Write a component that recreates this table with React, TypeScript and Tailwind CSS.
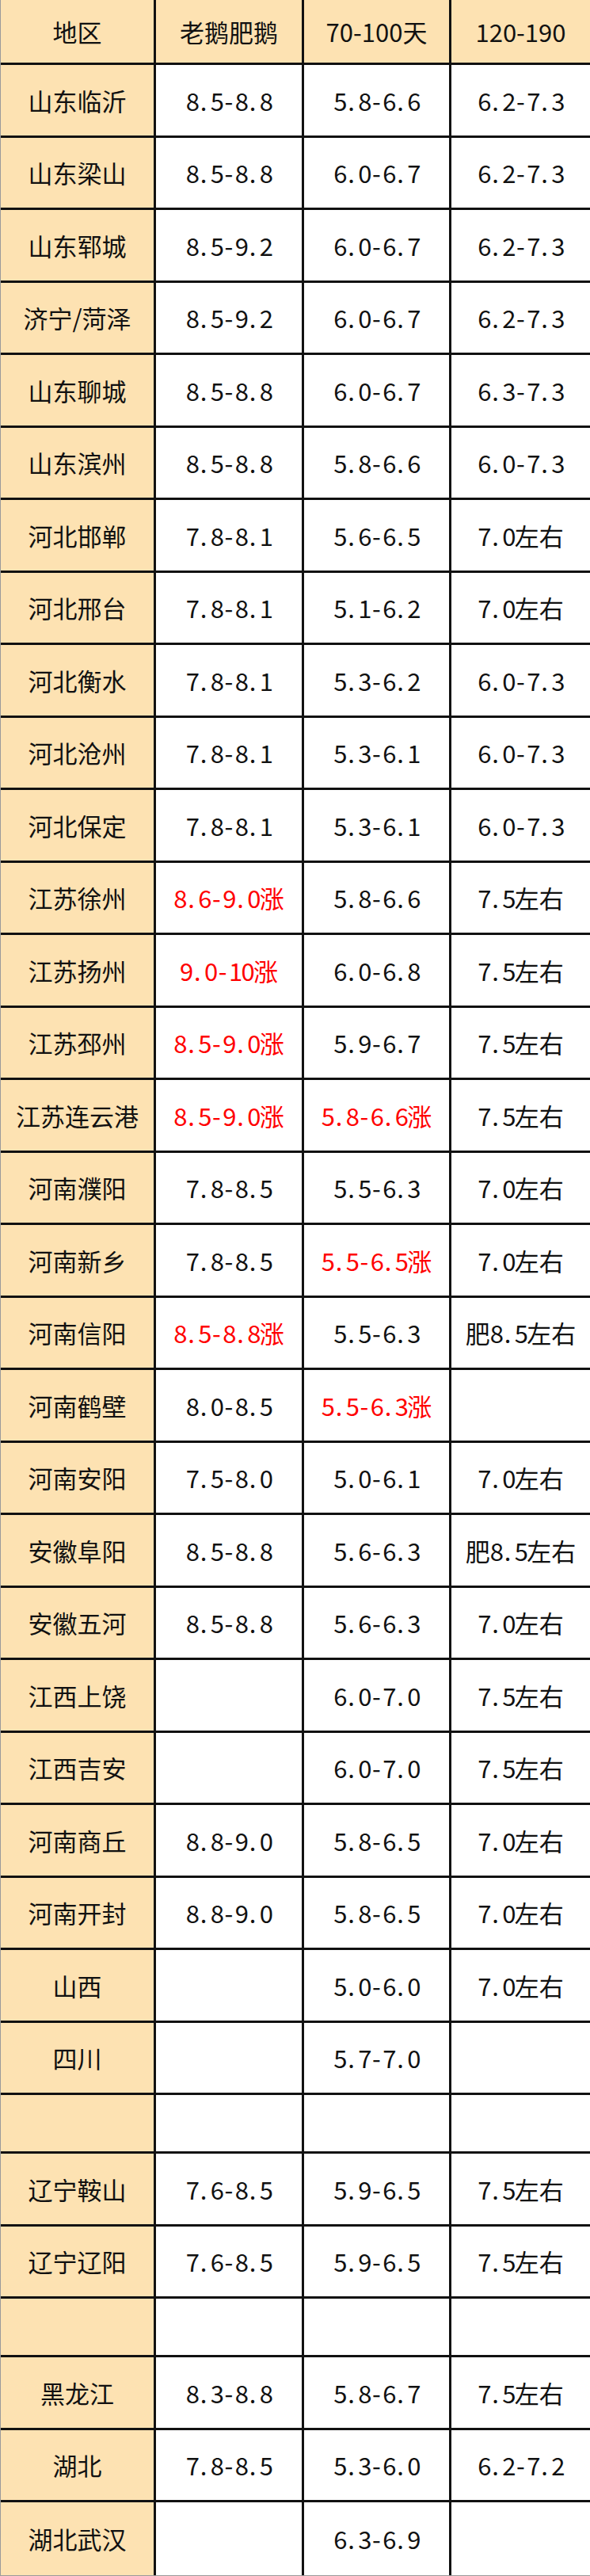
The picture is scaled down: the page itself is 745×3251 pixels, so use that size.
type Cell = string | { text: string; up: true };

interface Row {
  region: string;
  old?: Cell;
  mid?: Cell;
  late?: Cell;
  empty?: boolean;
}

const up = (text: string): Cell => ({ text, up: true });

const rows: Row[] = [
  { region: '山东临沂', old: '8.5-8.8', mid: '5.8-6.6', late: '6.2-7.3' },
  { region: '山东梁山', old: '8.5-8.8', mid: '6.0-6.7', late: '6.2-7.3' },
  { region: '山东郓城', old: '8.5-9.2', mid: '6.0-6.7', late: '6.2-7.3' },
  { region: '济宁/菏泽', old: '8.5-9.2', mid: '6.0-6.7', late: '6.2-7.3' },
  { region: '山东聊城', old: '8.5-8.8', mid: '6.0-6.7', late: '6.3-7.3' },
  { region: '山东滨州', old: '8.5-8.8', mid: '5.8-6.6', late: '6.0-7.3' },
  { region: '河北邯郸', old: '7.8-8.1', mid: '5.6-6.5', late: '7.0左右' },
  { region: '河北邢台', old: '7.8-8.1', mid: '5.1-6.2', late: '7.0左右' },
  { region: '河北衡水', old: '7.8-8.1', mid: '5.3-6.2', late: '6.0-7.3' },
  { region: '河北沧州', old: '7.8-8.1', mid: '5.3-6.1', late: '6.0-7.3' },
  { region: '河北保定', old: '7.8-8.1', mid: '5.3-6.1', late: '6.0-7.3' },
  { region: '江苏徐州', old: up('8.6-9.0涨'), mid: '5.8-6.6', late: '7.5左右' },
  { region: '江苏扬州', old: up('9.0-10涨'), mid: '6.0-6.8', late: '7.5左右' },
  { region: '江苏邳州', old: up('8.5-9.0涨'), mid: '5.9-6.7', late: '7.5左右' },
  { region: '江苏连云港', old: up('8.5-9.0涨'), mid: up('5.8-6.6涨'), late: '7.5左右' },
  { region: '河南濮阳', old: '7.8-8.5', mid: '5.5-6.3', late: '7.0左右' },
  { region: '河南新乡', old: '7.8-8.5', mid: up('5.5-6.5涨'), late: '7.0左右' },
  { region: '河南信阳', old: up('8.5-8.8涨'), mid: '5.5-6.3', late: '肥8.5左右' },
  { region: '河南鹤壁', old: '8.0-8.5', mid: up('5.5-6.3涨') },
  { region: '河南安阳', old: '7.5-8.0', mid: '5.0-6.1', late: '7.0左右' },
  { region: '安徽阜阳', old: '8.5-8.8', mid: '5.6-6.3', late: '肥8.5左右' },
  { region: '安徽五河', old: '8.5-8.8', mid: '5.6-6.3', late: '7.0左右' },
  { region: '江西上饶', mid: '6.0-7.0', late: '7.5左右' },
  { region: '江西吉安', mid: '6.0-7.0', late: '7.5左右' },
  { region: '河南商丘', old: '8.8-9.0', mid: '5.8-6.5', late: '7.0左右' },
  { region: '河南开封', old: '8.8-9.0', mid: '5.8-6.5', late: '7.0左右' },
  { region: '山西', mid: '5.0-6.0', late: '7.0左右' },
  { region: '四川', mid: '5.7-7.0' },
  { region: '', empty: true },
  { region: '辽宁鞍山', old: '7.6-8.5', mid: '5.9-6.5', late: '7.5左右' },
  { region: '辽宁辽阳', old: '7.6-8.5', mid: '5.9-6.5', late: '7.5左右' },
  { region: '', empty: true },
  { region: '黑龙江', old: '8.3-8.8', mid: '5.8-6.7', late: '7.5左右' },
  { region: '湖北', old: '7.8-8.5', mid: '5.3-6.0', late: '6.2-7.2' },
  { region: '湖北武汉', mid: '6.3-6.9' },
];

// the sheet's font sets latin characters on a half-width grid, so "8.5" reads as "8. 5"
function HalfWidth({ text }: { text: string }) {
  return (
    <>
      {Array.from(text).map((ch, i) =>
        ch.charCodeAt(0) < 128 ? (
          <span
            key={i}
            className={`inline-block w-[0.5em] ${ch === '.' ? 'text-left pl-[0.08em]' : 'text-center'}`}
          >
            {ch}
          </span>
        ) : (
          <span key={i}>{ch}</span>
        ),
      )}
    </>
  );
}

function Value({ cell }: { cell?: Cell }) {
  if (!cell) return null;
  if (typeof cell === 'string') return <span className="whitespace-nowrap"><HalfWidth text={cell} /></span>;
  return (
    <span className="whitespace-nowrap text-[#ff0000]">
      <HalfWidth text={cell.text} />
    </span>
  );
}

export default function App() {
  return (
    <div
      className="w-[745px] bg-white text-[31px] leading-none text-[#111]"
      style={{ fontFamily: '"Noto Sans CJK SC", sans-serif' }}
    >
      <div className="border-l border-[#9a9a9a] border-b border-b-[#9a9a9a]">
        {/* header */}
        <div className="flex h-[82px] border-b-[3px] border-[#111] bg-[#fde2b2]">
          <div className="flex w-[196px] items-center justify-center border-r-[3px] border-[#111]">地区</div>
          <div className="flex w-[187px] items-center justify-center border-r-[3px] border-[#111]">老鹅肥鹅</div>
          <div className="flex w-[186px] items-center justify-center border-r-[3px] border-[#111]">70-100天</div>
          <div className="flex flex-1 items-center justify-center">120-190</div>
        </div>

        {rows.map((row, i) => (
          <div
            key={i}
            className={`flex ${row.empty ? 'h-[74px]' : 'h-[91.5px]'} ${
              i === rows.length - 1 ? '' : 'border-b-[3px] border-[#111]'
            }`}
          >
            <div className="flex w-[196px] items-center justify-center border-r-[3px] border-[#111] bg-[#fde2b2]">
              {row.region}
            </div>
            <div className="flex w-[187px] items-center justify-center border-r-[3px] border-[#111]">
              <Value cell={row.old} />
            </div>
            <div className="flex w-[186px] items-center justify-center border-r-[3px] border-[#111]">
              <Value cell={row.mid} />
            </div>
            <div className="flex flex-1 items-center justify-center">
              <Value cell={row.late} />
            </div>
          </div>
        ))}
      </div>
    </div>
  );
}
